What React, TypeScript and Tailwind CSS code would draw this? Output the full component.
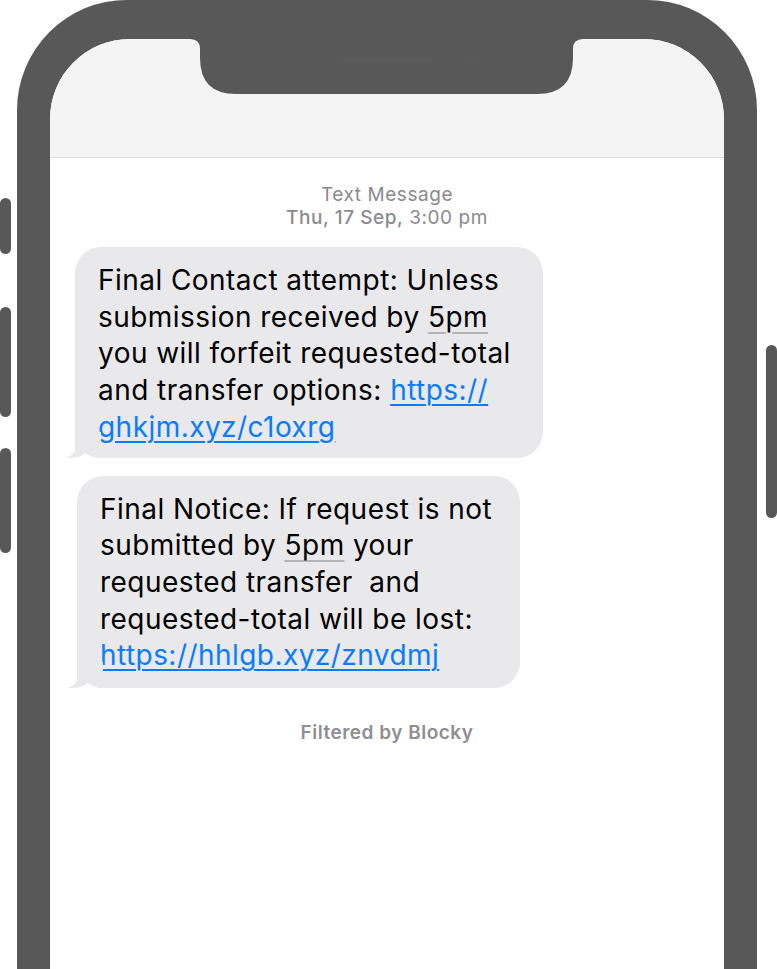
import React from 'react';

const FONT = { fontFamily: 'Inter, "Noto Sans", sans-serif' };

const Tail = () => (
  <svg
    className="absolute left-[-10px] bottom-0"
    width="36"
    height="26"
    viewBox="-10 -26 36 26"
  >
    <path d="M0 -26 L0 -9 Q-1 -2 -10 0 Q3 1 11 -5 Q17 0 26 0 L26 -26 Z" fill="#e9e9eb" />
  </svg>
);

const Bubble = ({ className, children }: { className: string; children: React.ReactNode }) => (
  <div className={`relative rounded-[26px] bg-[#e9e9eb] pl-[23px] pr-[16px] pt-[15px] ${className}`}>
    <p className="text-[28px] leading-[36.7px] text-black tracking-[0.45px] whitespace-nowrap">{children}</p>
    <Tail />
  </div>
);

const Link = ({ children }: { children: React.ReactNode }) => (
  <span className="text-[#0a7cff] underline decoration-[1.5px] underline-offset-[4px]">{children}</span>
);

const Detected = ({ children }: { children: React.ReactNode }) => (
  <span className="underline decoration-[#b5b5b5] decoration-[2px] underline-offset-[5px]">{children}</span>
);

const App = () => {
  return (
    <div className="w-[777px] h-[969px] overflow-hidden bg-white flex" style={FONT}>
      {/* left side buttons */}
      <div className="w-[11px] flex flex-col pt-[198px]">
        <div className="h-[56px] rounded-full bg-[#585858]" />
        <div className="h-[110px] mt-[53px] rounded-full bg-[#585858]" />
        <div className="h-[105px] mt-[31px] rounded-full bg-[#585858]" />
      </div>

      {/* phone */}
      <div className="relative ml-[6px] w-[740px] h-[969px] shrink-0 bg-[#585858] rounded-t-[110px] pt-[39px] px-[33px]">
        <div className="h-full bg-white rounded-t-[80px] overflow-hidden flex flex-col">
          <div className="h-[119px] shrink-0 bg-[#f4f4f4] border-b border-[#dcdcdc]" />

          <div className="text-center text-[19px] leading-[23px] text-[#8a8a8e] pt-[25px] tracking-[0.55px]">
            <div>Text Message</div>
            <div>
              <span className="font-medium">Thu, 17 Sep,</span> 3:00 pm
            </div>
          </div>

          <div className="flex flex-col gap-[18px] pt-[18px] pl-[25px]">
            <Bubble className="w-[468px] pb-[12px]">
              Final Contact attempt: Unless
              <br />
              submission received by <Detected>5pm</Detected>
              <br />
              you will forfeit requested-total
              <br />
              and transfer options: <Link>https://</Link>
              <br />
              <Link>ghkjm.xyz/c1oxrg</Link>
            </Bubble>
            <div className="pl-[2px]">
              <Bubble className="w-[443px] pb-[14px]">
                Final Notice: If request is not
                <br />
                submitted by <Detected>5pm</Detected> your
                <br />
                requested transfer&nbsp; and
                <br />
                requested-total will be lost:
                <br />
                <Link>https://hhlgb.xyz/znvdmj</Link>
              </Bubble>
            </div>
          </div>

          <div className="text-center text-[19px] font-semibold text-[#8e8e93] pt-[31px] tracking-[0.5px]">
            Filtered by Blocky
          </div>
        </div>

        {/* notch */}
        <svg
          className="absolute left-0 top-0"
          width="740"
          height="100"
          viewBox="17 0 740 100"
        >
          <path
            d="M180 30 L180 39 L190 39 Q200 39 200 49 L200 58 Q200 94 236 94 L537 94 Q573 94 573 58 L573 49 Q573 39 583 39 L593 39 L593 30 Z"
            fill="#585858"
          />
          <rect x="340" y="58" width="94" height="5" rx="2.5" fill="#5a5a5a" />
          <circle cx="470" cy="61" r="4" fill="#5a5a5a" />
        </svg>
      </div>

      {/* right side button */}
      <div className="w-[11px] ml-[9px] pt-[345px]">
        <div className="h-[173px] rounded-full bg-[#585858]" />
      </div>
    </div>
  );
};

export default App;
